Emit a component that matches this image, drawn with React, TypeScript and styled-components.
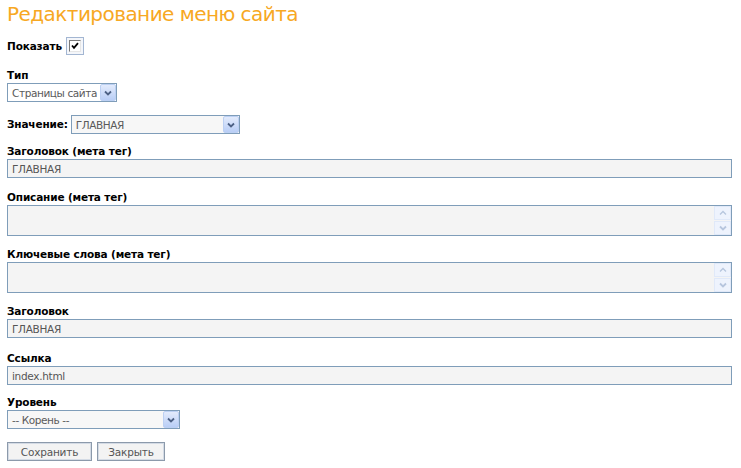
import React from "react";
import styled, { createGlobalStyle } from "styled-components";

const Global = createGlobalStyle`
  html, body { margin: 0; padding: 0; background: #ffffff; }
  body { font-family: "DejaVu Sans", Verdana, sans-serif; }
`;

const Page = styled.div`
  padding: 0 9px 0 7px;
  width: 741px;
  box-sizing: border-box;
`;

const Title = styled.h1`
  margin: 0;
  padding-top: 1px;
  font-family: "DejaVu Sans", sans-serif;
  font-weight: normal;
  font-size: 20px;
  line-height: 26px;
  color: #f7a823;
  letter-spacing: -0.55px;
`;

const Field = styled.div<{ $mt: number }>`
  margin-top: ${(p) => p.$mt}px;
  display: flex;
  flex-direction: column;
`;

const Inline = styled.div<{ $mt: number; $gap: number }>`
  margin-top: ${(p) => p.$mt}px;
  display: flex;
  align-items: center;
  gap: ${(p) => p.$gap}px;
`;

const Label = styled.label`
  font-family: "DejaVu Sans", sans-serif;
  font-weight: bold;
  font-size: 10.5px;
  line-height: 13px;
  color: #000;
  letter-spacing: -0.15px;
  margin-bottom: 1px;
`;

const InlineLabel = styled(Label)`
  margin-bottom: 0;
`;

const CheckFrame = styled.span`
  width: 18px;
  height: 18px;
  box-sizing: border-box;
  border: 1px solid #a3b6d2;
  background: #f4f6fa;
  display: inline-flex;
  align-items: center;
  justify-content: center;
`;

const CheckInner = styled.span`
  width: 12px;
  height: 12px;
  box-sizing: border-box;
  border-top: 1px solid #7a7a7a;
  border-left: 1px solid #7a7a7a;
  border-bottom: 1px solid #e6e6e6;
  border-right: 1px solid #e6e6e6;
  background: #fff;
  display: flex;
  align-items: center;
  justify-content: center;
`;

const SelectBox = styled.div<{ $w: number; $bg: string }>`
  width: ${(p) => p.$w}px;
  height: 19px;
  box-sizing: border-box;
  border: 1px solid #7f9db9;
  background: ${(p) => p.$bg};
  display: flex;
  align-items: center;
  justify-content: space-between;
  padding-left: 4px;
  font-family: "DejaVu Sans", sans-serif;
  font-size: 10.5px;
  color: #5a5a5a;
  letter-spacing: -0.4px;
`;

const ArrowBtn = styled.span`
  width: 16px;
  height: 17px;
  box-sizing: border-box;
  border: 1px solid #bcd0f3;
  border-radius: 2px;
  background: linear-gradient(#e3ebfc, #b9cef6);
  display: flex;
  align-items: center;
  justify-content: center;
`;

const TextBox = styled.div`
  height: 19px;
  box-sizing: border-box;
  border: 1px solid #7f9db9;
  background: #f4f4f4;
  padding-left: 4px;
  display: flex;
  align-items: center;
  font-family: "DejaVu Sans", sans-serif;
  font-size: 10.5px;
  color: #555;
  letter-spacing: -0.3px;
`;

const Area = styled.div`
  height: 31px;
  box-sizing: border-box;
  border: 1px solid #7f9db9;
  background: #f4f4f4;
  display: flex;
  justify-content: flex-end;
`;

const ScrollCol = styled.div`
  width: 17px;
  display: flex;
  flex-direction: column;
  gap: 1px;
`;

const ScrollBtn = styled.span`
  flex: 1;
  border: 1px solid #e0e9f9;
  background: #eef3fd;
  display: flex;
  align-items: center;
  justify-content: center;
`;

const Buttons = styled.div`
  margin-top: 13px;
  display: flex;
  gap: 5px;
`;

const Button = styled.button<{ $w: number }>`
  width: ${(p) => p.$w}px;
  height: 19px;
  box-sizing: border-box;
  border: 1px solid #8c9aab;
  outline: 1px solid #d4dbe5;
  outline-offset: -2px;
  background: #f3f3f3;
  font-family: "DejaVu Sans", sans-serif;
  font-size: 10.5px;
  color: #555;
  letter-spacing: -0.2px;
  padding: 0;
`;

const Chevron = ({ color = "#4d6185" }: { color?: string }) => (
  <svg width="8" height="6" viewBox="0 0 8 6">
    <path d="M1 1.5 L4 4.5 L7 1.5" fill="none" stroke={color} strokeWidth="1.8" />
  </svg>
);

const ChevronUp = ({ color = "#b7c6de" }: { color?: string }) => (
  <svg width="8" height="6" viewBox="0 0 8 6">
    <path d="M1 4.5 L4 1.5 L7 4.5" fill="none" stroke={color} strokeWidth="1.3" />
  </svg>
);

const Select = ({ w, text, bg = "#fff" }: { w: number; text: string; bg?: string }) => (
  <SelectBox $w={w} $bg={bg}>
    <span>{text}</span>
    <ArrowBtn>
      <Chevron />
    </ArrowBtn>
  </SelectBox>
);

const TextArea = () => (
  <Area>
    <ScrollCol>
      <ScrollBtn>
        <ChevronUp />
      </ScrollBtn>
      <ScrollBtn>
        <Chevron color="#b7c6de" />
      </ScrollBtn>
    </ScrollCol>
  </Area>
);

export default function App() {
  return (
    <Page>
      <Global />
      <Title>Редактирование меню сайта</Title>
      <Inline $mt={10} $gap={4}>
        <InlineLabel>Показать</InlineLabel>
        <CheckFrame>
          <CheckInner>
            <svg width="8" height="8" viewBox="0 0 8 8">
              <path d="M1 3.5 L3 5.8 L7 1.2" fill="none" stroke="#000" strokeWidth="1.8" />
            </svg>
          </CheckInner>
        </CheckFrame>
      </Inline>
      <Field $mt={14}>
        <Label>Тип</Label>
        <Select w={110} text="Страницы сайта" />
      </Field>
      <Inline $mt={13} $gap={3}>
        <InlineLabel>Значение:</InlineLabel>
        <Select w={169} text="ГЛАВНАЯ" bg="#f7f7f7" />
      </Inline>
      <Field $mt={11}>
        <Label>Заголовок (мета тег)</Label>
        <TextBox>ГЛАВНАЯ</TextBox>
      </Field>
      <Field $mt={13}>
        <Label>Описание (мета тег)</Label>
        <TextArea />
      </Field>
      <Field $mt={12}>
        <Label>Ключевые слова (мета тег)</Label>
        <TextArea />
      </Field>
      <Field $mt={12}>
        <Label>Заголовок</Label>
        <TextBox>ГЛАВНАЯ</TextBox>
      </Field>
      <Field $mt={14}>
        <Label>Ссылка</Label>
        <TextBox>index.html</TextBox>
      </Field>
      <Field $mt={11}>
        <Label>Уровень</Label>
        <Select w={173} text="-- Корень --" bg="#f7f7f7" />
      </Field>
      <Buttons>
        <Button $w={85}>Сохранить</Button>
        <Button $w={68}>Закрыть</Button>
      </Buttons>
    </Page>
  );
}
